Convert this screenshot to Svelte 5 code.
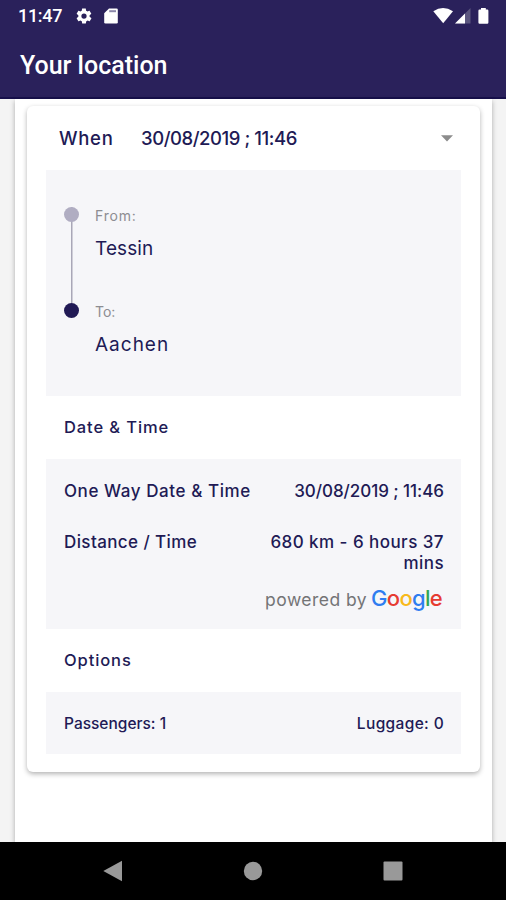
<script>
	let when = '30/08/2019 ; 11:46';

	let stops = [
		{ label: 'From:', place: 'Tessin' },
		{ label: 'To:', place: 'Aachen' }
	];

	let brand = [
		['G', '#2f7df0'],
		['o', '#e63b32'],
		['o', '#f8b91c'],
		['g', '#2f7df0'],
		['l', '#33a654'],
		['e', '#e63b32']
	];
</script>

<div class="screen">
	<header>
		<div class="status">
			<span class="clock">11:47</span>
			<svg class="gear" width="18" height="18" viewBox="0 0 24 24">
				<path
					fill="#fff"
					fill-rule="evenodd"
					d="M19.4 13c.1-.3.1-.7.1-1s0-.7-.1-1l2.1-1.7c.2-.1.2-.4.1-.6l-2-3.5c-.1-.2-.4-.3-.6-.2l-2.5 1c-.5-.4-1.1-.7-1.7-1l-.4-2.6c0-.2-.2-.4-.5-.4h-4c-.2 0-.4.2-.5.4L9 5c-.6.3-1.2.6-1.7 1L4.9 5c-.2-.1-.5 0-.6.2l-2 3.5c-.1.2-.1.5.1.6L4.5 11c-.1.3-.1.7-.1 1s0 .7.1 1l-2.1 1.7c-.2.1-.2.4-.1.6l2 3.5c.1.2.4.3.6.2l2.5-1c.5.4 1.1.7 1.7 1l.4 2.6c0 .2.2.4.5.4h4c.2 0 .4-.2.5-.4L15 19c.6-.3 1.2-.6 1.7-1l2.5 1c.2.1.5 0 .6-.2l2-3.5c.1-.2.1-.5-.1-.6L19.4 13zM12 15.5a3.5 3.5 0 1 1 0-7 3.5 3.5 0 0 1 0 7z"
				/>
			</svg>
			<svg class="sd" width="14" height="16" viewBox="0 0 14 16">
				<path fill="#fff" d="M5 .5h7.500q1.300 0 1.300 1.300v12.400q0 1.300-1.300 1.300h-11Q.2 15.500.2 14.200V5.300z" />
				<path fill="#8c88aa" d="M5.200 2.200h6.800v2H5.200z" />
			</svg>
			<span class="grow"></span>
			<svg width="58" height="18" viewBox="0 0 58 18">
				<path fill="#fff" d="M.3 4.300Q10 -2.100 20 4.300L10.200 16.300z" />
				<path fill="#5b567f" d="M37.500 1v15.500H22z" />
				<path fill="#fff" d="M32 6.500v10H22z" />
				<path fill="#fff" d="M48 .9h4.800v1.700h1.400q1.200 0 1.200 1.200v11.800q0 1.200-1.200 1.200h-7.600q-1.200 0-1.200-1.200V3.800q0-1.200 1.200-1.200H48z" />
			</svg>
		</div>
		<h1>Your location</h1>
	</header>

	<main>
		<div class="sheet">
			<div class="card">
				<div class="when">
					<span class="when-label">When</span>
					<span class="when-date">{when}</span>
					<svg width="12" height="7" viewBox="0 0 12 7"><path fill="#8c8c8c" d="M0 .3h12L6 6.600z" /></svg>
				</div>

				<section class="panel route">
					{#each stops as stop, i}
						<div class="stop" class:last={i == stops.length - 1}>
							<div class="rail"><i class="dot"></i></div>
							<div>
								<div class="label">{stop.label}</div>
								<div class="place">{stop.place}</div>
							</div>
						</div>
					{/each}
				</section>

				<h2>Date &amp; Time</h2>
				<section class="panel trip">
					<div class="row">
						<span class="one-way">One Way Date &amp; Time</span>
						<span class="value-date">{when}</span>
					</div>
					<div class="row second">
						<span class="distance">Distance / Time</span>
						<span class="value">680 km - 6 hours 37<br />mins</span>
					</div>
					<div class="powered">
						<span>powered by</span>
						<span class="brand"
							>{#each brand as [letter, color]}<b style:color>{letter}</b>{/each}</span
						>
					</div>
				</section>

				<h2>Options</h2>
				<section class="panel options">
					<span>Passengers: 1</span>
					<span class="luggage">Luggage: 0</span>
				</section>
			</div>
		</div>
	</main>

	<nav>
		<svg width="20" height="22" viewBox="0 0 20 22"><path fill="#999" d="M19 .8v20.400L.3 11z" /></svg>
		<svg width="20" height="20" viewBox="0 0 20 20"><circle cx="10" cy="10" r="9.200" fill="#999" /></svg>
		<svg width="20" height="20" viewBox="0 0 20 20"><rect x=".5" y=".5" width="19" height="19" rx="1" fill="#999" /></svg>
	</nav>
</div>

<style>
	:global(body) {
		margin: 0;
	}

	.screen {
		width: 506px;
		height: 900px;
		display: flex;
		flex-direction: column;
		overflow: hidden;
		font-family: Inter, sans-serif;
		font-weight: 450;
		color: #211a55;
	}

	svg {
		display: block;
		flex: none;
	}

	header {
		height: 99px;
		flex: none;
		box-sizing: border-box;
		background: #2a215b;
		border-bottom: 2px solid #17104b;
		color: #fff;
		font-family: Roboto, sans-serif;
		font-weight: 500;
	}

	.status {
		display: flex;
		align-items: center;
		height: 32px;
		padding: 0 15px 0 18px;
	}

	.clock {
		width: 57px;
		font-size: 18px;
		line-height: 30px;
		letter-spacing: -0.3px;
	}

	.sd {
		margin-left: 11px;
	}

	.grow {
		flex: 1;
	}

	h1 {
		margin: 18px 0 0 20px;
		font-size: 25px;
		line-height: 32px;
		font-weight: 500;
	}

	main {
		height: 743px;
		flex: none;
		background: #f4f4f4;
		padding: 0 14px 0 15px;
		box-sizing: border-box;
	}

	.sheet {
		height: 100%;
		box-sizing: border-box;
		padding: 7px 12px 0;
		background: #fff;
		box-shadow: 0 2px 5px rgba(0, 0, 0, 0.3);
	}

	.card {
		height: 666px;
		box-sizing: border-box;
		padding: 0 19px;
		border-radius: 6px;
		background: #fff;
		box-shadow: 0 2px 5px rgba(0, 0, 0, 0.3);
	}

	.when {
		display: flex;
		align-items: center;
		height: 64px;
		padding: 0 8px 0 13px;
		font-size: 18.5px;
	}

	.when-label {
		width: 82px;
		letter-spacing: 0.7px;
	}

	.when-date {
		flex: 1;
		letter-spacing: -0.45px;
	}

	.panel {
		background: #f6f6f9;
		box-sizing: border-box;
		padding: 0 17px 0 18px;
	}

	.route {
		height: 226px;
		padding-top: 37px;
	}

	.stop {
		display: flex;
		height: 96px;
		gap: 16px;
	}

	.rail {
		width: 15px;
		background: linear-gradient(#a9a7b7, #a9a7b7) 7px 0 / 1.5px 100% no-repeat;
	}

	.last .rail {
		background: none;
	}

	.dot {
		display: block;
		width: 15px;
		height: 15px;
		border-radius: 50%;
		background: #b0adc2;
	}

	.last .dot {
		background: #211a55;
	}

	.label {
		font-size: 14px;
		font-weight: 400;
		line-height: 17px;
		letter-spacing: 0.8px;
		color: #8d8d92;
	}

	.last .label {
		letter-spacing: 0;
	}

	.place {
		margin-top: 12px;
		font-size: 19px;
		font-weight: 400;
		line-height: 26px;
		letter-spacing: 0.1px;
	}

	.last .place {
		letter-spacing: 1px;
	}

	h2 {
		margin: 0;
		padding-left: 18px;
		font-size: 16.5px;
		font-weight: inherit;
		line-height: 63px;
		letter-spacing: 0.9px;
	}

	.trip {
		height: 170px;
		padding-top: 22px;
	}

	.row {
		display: flex;
		justify-content: space-between;
		font-size: 17px;
		line-height: 21px;
	}

	.second {
		margin-top: 30px;
	}

	.one-way {
		letter-spacing: 0.58px;
	}

	.value-date {
		letter-spacing: -0.05px;
	}

	.distance {
		letter-spacing: 0.4px;
	}

	.value {
		text-align: right;
		letter-spacing: 0.45px;
	}

	.powered {
		display: flex;
		justify-content: flex-end;
		align-items: baseline;
		gap: 4px;
		margin-top: 8px;
		padding-right: 2px;
		font-size: 17.5px;
		font-weight: 400;
		line-height: 32px;
		letter-spacing: 0.45px;
		color: #747476;
	}

	.brand {
		font-size: 22px;
		letter-spacing: -0.7px;
	}

	b {
		font-weight: 500;
	}

	.options {
		display: flex;
		justify-content: space-between;
		height: 62px;
		line-height: 63px;
		font-size: 15.5px;
	}

	.luggage {
		letter-spacing: 0.35px;
	}

	nav {
		display: flex;
		flex: 1;
		align-items: center;
		justify-content: center;
		gap: 120px;
		background: #000;
	}
</style>
